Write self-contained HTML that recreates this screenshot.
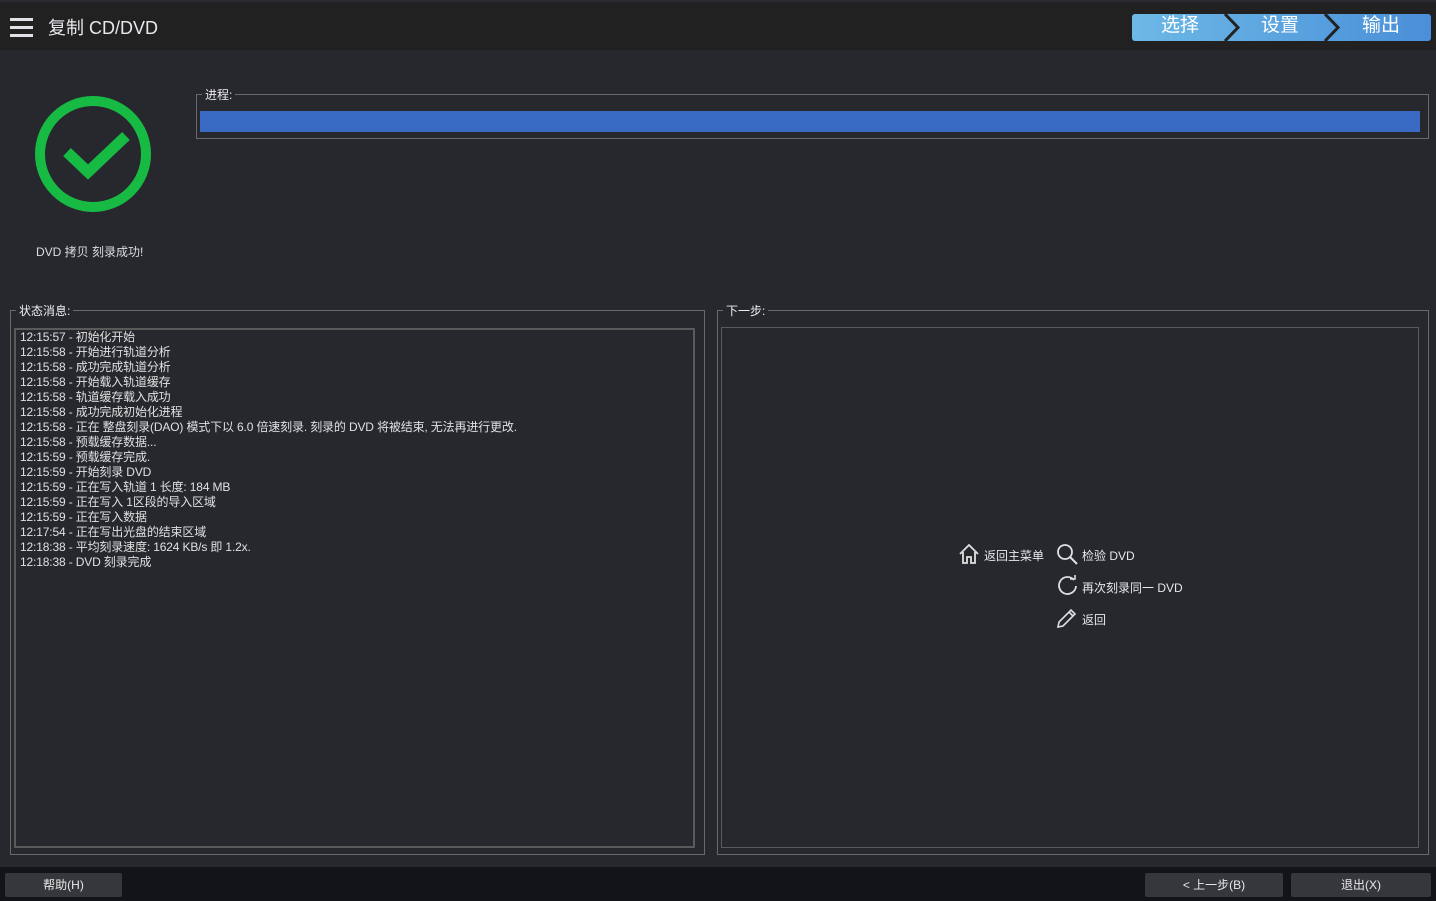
<!DOCTYPE html>
<html><head><meta charset="utf-8"><style>
*{margin:0;padding:0;box-sizing:border-box}
body{width:1436px;height:901px;background:#26282e;font-family:"Liberation Sans","Noto Sans CJK SC",sans-serif;color:#e6e6e6;position:relative;overflow:hidden;font-size:12px}
.hdr{position:absolute;left:0;top:0;width:1436px;height:50px;background:#212121;border-top:2px solid #2a2b30}
.ham{position:absolute;left:10px;top:16px;width:23px}
.ham div{height:3px;background:#e0e0e6;margin-bottom:5px}
.title{position:absolute;left:48px;top:12px;font-size:18px;color:#e8e8ee}
.steps{position:absolute;left:1132px;top:12px;width:299px;height:27px;border-radius:3px;background:linear-gradient(90deg,#6cb8e6,#4a8fd8)}
.steps span{position:absolute;top:-1px;font-size:19px;color:#fff;line-height:26px}
.fs{position:absolute;border:1px solid #6a6a6a}
.lg{position:absolute;background:#26282e;padding:0 3px;font-size:12px;color:#eee;top:-9px;left:5px}
.log{position:absolute;left:14px;top:328px;width:681px;height:520px;border:2px solid #5a5a5a}
.log div{line-height:15px;font-size:12px;color:#e0e0e0;padding-left:4px;letter-spacing:-0.15px}
.btn{position:absolute;top:873px;height:24px;background:#35373c;border-radius:2px;color:#e8e8e8;font-size:12px;text-align:center;line-height:25px}
.act{position:absolute;font-size:12px;color:#e8e8e8}
</style></head><body>
<div class="hdr">
<div class="ham"><div></div><div></div><div></div></div>
<div class="title">复制 CD/DVD</div>
<div class="steps">
<span style="left:29px">选择</span><span style="left:129px">设置</span><span style="left:230px">输出</span>
<svg style="position:absolute;left:0;top:0" width="299" height="27"><path d="M93 0 L106 13.5 L93 27" stroke="#222" stroke-width="3" fill="none"/><path d="M193 0 L206 13.5 L193 27" stroke="#222" stroke-width="3" fill="none"/></svg>
</div>
</div>
<svg style="position:absolute;left:30px;top:92px" width="130" height="130"><circle cx="63" cy="62" r="53" stroke="#17bb44" stroke-width="10" fill="none"/><path d="M37 60 L58 80 L96 44" stroke="#17bb44" stroke-width="11" fill="none"/></svg>
<div style="position:absolute;left:36px;top:243px;font-size:12px;color:#ddd">DVD 拷贝 刻录成功!</div>
<div class="fs" style="left:196px;top:94px;width:1233px;height:45px"><div class="lg" style="left:5px">进程:</div>
<div style="position:absolute;left:3px;top:16px;width:1220px;height:21px;background:#3a6bc4"></div></div>
<div class="fs" style="left:10px;top:310px;width:695px;height:545px"><div class="lg">状态消息:</div></div>
<div class="log">
<div>12:15:57 - 初始化开始</div><div>12:15:58 - 开始进行轨道分析</div><div>12:15:58 - 成功完成轨道分析</div><div>12:15:58 - 开始载入轨道缓存</div><div>12:15:58 - 轨道缓存载入成功</div><div>12:15:58 - 成功完成初始化进程</div><div>12:15:58 - 正在 整盘刻录(DAO) 模式下以 6.0 倍速刻录. 刻录的 DVD 将被结束, 无法再进行更改.</div><div>12:15:58 - 预载缓存数据...</div><div>12:15:59 - 预载缓存完成.</div><div>12:15:59 - 开始刻录 DVD</div><div>12:15:59 - 正在写入轨道 1 长度: 184 MB</div><div>12:15:59 - 正在写入 1区段的导入区域</div><div>12:15:59 - 正在写入数据</div><div>12:17:54 - 正在写出光盘的结束区域</div><div>12:18:38 - 平均刻录速度: 1624 KB/s 即 1.2x.</div><div>12:18:38 - DVD 刻录完成</div>
</div>
<div class="fs" style="left:717px;top:310px;width:712px;height:545px"><div class="lg">下一步:</div>
<div style="position:absolute;left:3px;top:16px;width:698px;height:521px;border:1px solid #5a5a5a"></div></div>
<svg style="position:absolute;left:958px;top:543px" width="24" height="22"><path d="M2 11 L11 2 L20 11 M5 9 V20 H9 V14 H13 V20 H17 V9" stroke="#e0e0e0" stroke-width="1.8" fill="none"/></svg>
<div class="act" style="left:984px;top:547px">返回主菜单</div>
<svg style="position:absolute;left:1056px;top:543px" width="24" height="22"><circle cx="9" cy="9" r="7" stroke="#e0e0e0" stroke-width="1.8" fill="none"/><path d="M14 14 L21 21" stroke="#e0e0e0" stroke-width="2"/></svg>
<div class="act" style="left:1082px;top:547px">检验 DVD</div>
<svg style="position:absolute;left:1056px;top:575px" width="24" height="22"><path d="M18 5 A8.5 8.5 0 1 0 20 11" stroke="#e0e0e0" stroke-width="1.8" fill="none"/><path d="M14 4 L19 4 L19 0" stroke="#e0e0e0" stroke-width="1.6" fill="none"/></svg>
<div class="act" style="left:1082px;top:579px">再次刻录同一 DVD</div>
<svg style="position:absolute;left:1056px;top:607px" width="24" height="22"><path d="M2 20 L3 15 L15 3 L19 7 L7 19 Z M13 5 L17 9" stroke="#e0e0e0" stroke-width="1.6" fill="none"/></svg>
<div class="act" style="left:1082px;top:611px">返回</div>
<div style="position:absolute;left:0;top:867px;width:1436px;height:34px;background:#131417"></div>
<div class="btn" style="left:5px;width:117px">帮助(H)</div>
<div class="btn" style="left:1145px;width:138px">&lt; 上一步(B)</div>
<div class="btn" style="left:1291px;width:140px">退出(X)</div>
</body></html>
